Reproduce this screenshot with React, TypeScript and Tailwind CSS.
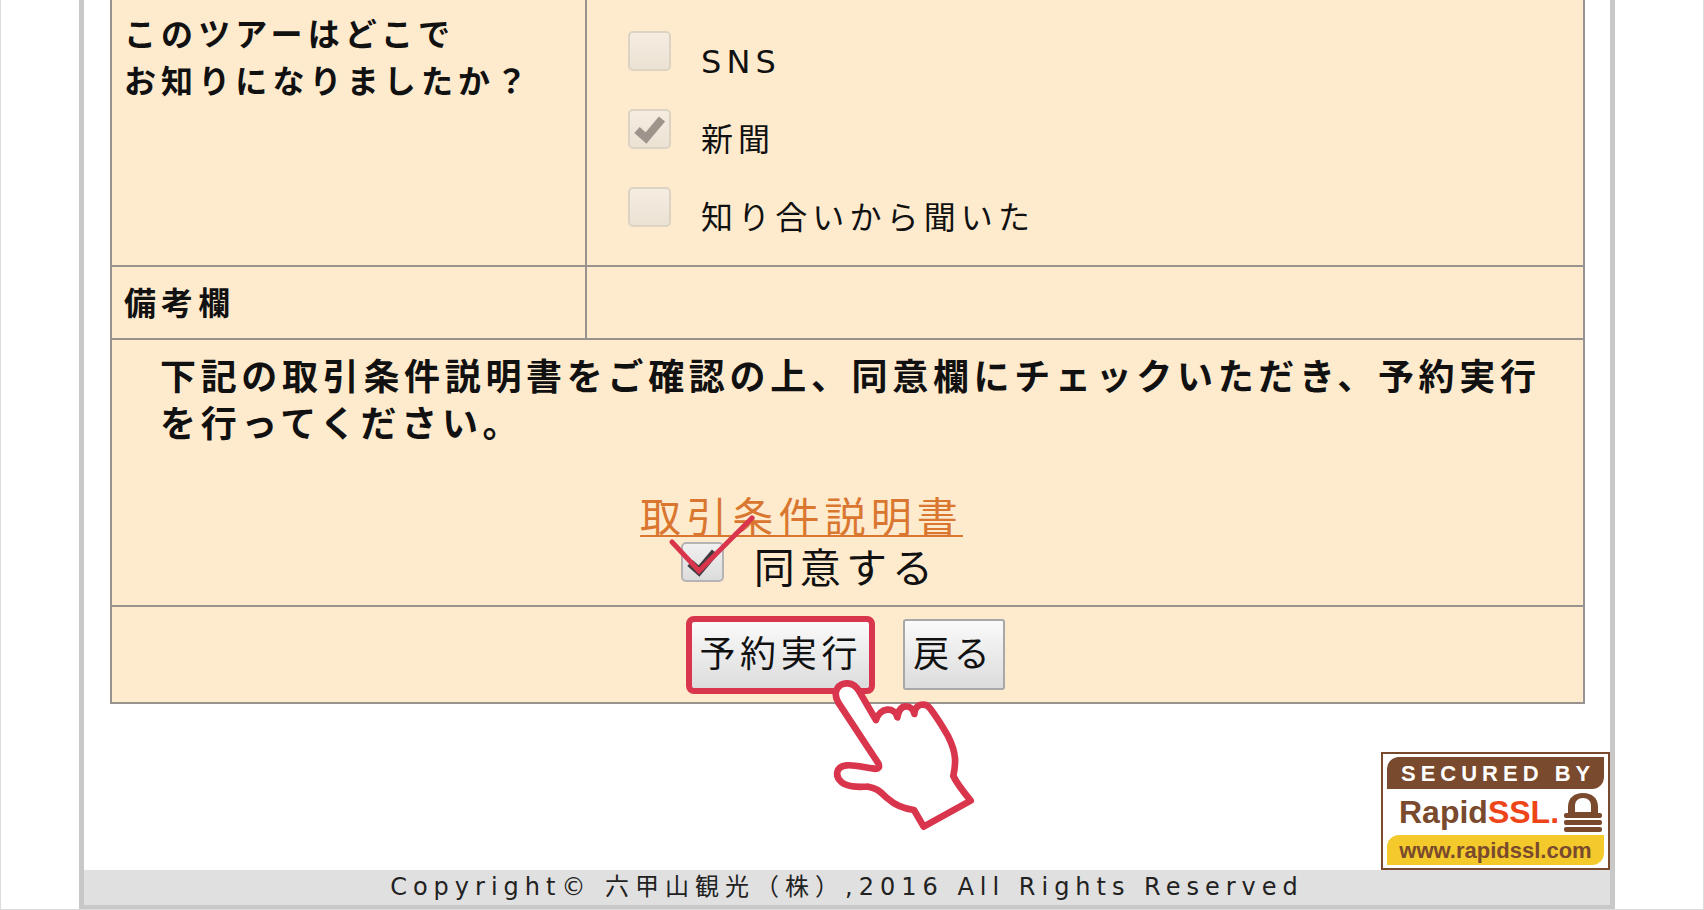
type Source = {
  id: string;
  label: string;
  checked: boolean;
};

const sources: Source[] = [
  { id: "sns", label: "SNS", checked: false },
  { id: "newspaper", label: "新聞", checked: true },
  { id: "friend", label: "知り合いから聞いた", checked: false },
];

type CheckBoxProps = {
  id: string;
  checked: boolean;
  disabled?: boolean;
};

const CheckBox = ({ id, checked, disabled }: CheckBoxProps) => (
  <span className="relative block h-10 w-[43px] shrink-0">
    <input
      id={id}
      type="checkbox"
      defaultChecked={checked}
      disabled={disabled}
      className="peer block h-10 w-[43px] appearance-none rounded-[5px] border-2 border-[#b5b3b3] bg-linear-to-b from-[#f0f0f0] to-[#dcdcde] disabled:border-[#ddd3c4] disabled:from-[#f5ede0] disabled:to-[#ebe2d4]"
    />
    <svg
      viewBox="0 0 43 40"
      className="pointer-events-none absolute inset-0 hidden h-10 w-[43px] fill-none stroke-[#403c40] stroke-8 peer-checked:block peer-disabled:stroke-[#9d948b]"
    >
      <path d="M9 21 L18 29 L34 10" />
    </svg>
  </span>
);

const SourceList = () => (
  <ul className="pt-[31px]">
    {sources.map((source) => (
      <li key={source.id} className="flex h-[78px] items-start gap-[30px]">
        <CheckBox id={source.id} checked={source.checked} disabled />
        <label htmlFor={source.id} className="pt-2">
          {source.label}
        </label>
      </li>
    ))}
  </ul>
);

const Agreement = () => (
  <>
    <p className="pr-6 pl-12 text-[36px] font-bold tracking-[0.13em]">
      下記の取引条件説明書をご確認の上、同意欄にチェックいただき、予約実行を行ってください。
    </p>
    <div className="mt-[47px] pr-[92px] text-center text-[41px]">
      <a
        href="#terms"
        className="text-[#d9762f] underline decoration-2 underline-offset-3"
      >
        取引条件説明書
      </a>
    </div>
    <div className="flex justify-center pr-[76px] text-[41px]">
      <div className="relative flex items-start gap-[30px]">
        <CheckBox id="agree" checked />
        <label htmlFor="agree" className="pt-1">
          同意する
        </label>
        <svg
          viewBox="0 0 90 65"
          className="pointer-events-none absolute -top-7 -left-3 h-[65px] w-[90px] fill-none stroke-[#d9354c] stroke-5"
        >
          <path d="M3 28 L30 57 L83 4" strokeLinecap="round" />
        </svg>
      </div>
    </div>
  </>
);

const PointingHand = () => (
  <svg
    viewBox="0 0 600 570"
    className="pointer-events-none absolute top-11 left-[114px] z-10 h-[190px] w-[200px]"
  >
    <path
      d="M228 180 L178 95 C160 62 125 65 112 85 C104 98 106 112 115 128 L235 310 C240 322 236 328 222 326 C190 322 165 314 140 316 C105 320 105 350 125 367 C150 385 185 380 205 380 C235 385 245 400 262 415 C290 440 315 447 342 450 L371 500 L512 422 C490 395 470 370 460 348 C468 310 470 280 445 230 C425 195 405 165 390 145 C378 128 345 128 343 162 C338 135 300 125 292 172 C285 140 240 140 228 180 Z"
      fill="#fff"
      stroke="#d9354c"
      strokeWidth="20"
      strokeLinejoin="round"
    />
  </svg>
);

const Actions = () => (
  <div className="flex items-center justify-center gap-7 pr-1 text-[36px]">
    <div className="relative">
      <button
        type="submit"
        className="block h-[78px] rounded-lg border-6 border-[#d9354c] bg-linear-to-b from-[#fafafa] to-[#dcdcdc] px-[7px] tracking-[0.13em]"
      >
        予約実行
      </button>
      <PointingHand />
    </div>
    <button
      type="button"
      className="h-[71px] rounded-[3px] border-2 border-[#a8a8a8] bg-linear-to-b from-[#fafafa] to-[#dcdcdc] px-2 tracking-[0.13em]"
    >
      戻る
    </button>
  </div>
);

const RapidSslBadge = () => (
  <a
    href="#rapidssl"
    className="flex h-[118px] w-[229px] flex-col border-2 border-[#794a2d] bg-white p-1 pt-[3px] font-['Liberation_Sans',sans-serif] font-bold text-[#794a2d]"
  >
    <span className="h-8 rounded-tl-xl rounded-br-xl bg-[#794a2d] pl-[14px] text-[22px] leading-[34px] tracking-[5px] whitespace-nowrap text-white">
      SECURED BY
    </span>
    <span className="flex h-[46px] items-center justify-between pr-[2px] pl-3 text-[32px] leading-[46px]">
      <span>
        Rapid<span className="text-[#ee4518]">SSL.</span>
      </span>
      <svg viewBox="0 0 38 40" className="h-10 w-[38px]" fill="#794a2d">
        <path d="M4 21 V15 C4 6 10 1 19 1 C28 1 34 6 34 15 V21 Z" />
        <path d="M11 20 V14 C11 9 14 6 19 6 C24 6 27 9 27 14 V20 Z" fill="#fff" />
        <rect x="0" y="21" width="38" height="5" rx="2" />
        <rect x="0" y="28" width="38" height="5" rx="2" />
        <rect x="0" y="35" width="38" height="5" rx="2" />
      </svg>
    </span>
    <span className="h-[30px] rounded-tl-xl rounded-br-xl bg-[#f4c92c] text-center text-[22px] leading-[32px]">
      www.rapidssl.com
    </span>
  </a>
);

const cell = "border-2 border-[#999390] p-0";

const App = () => {
  return (
    <div className="border-x border-b border-[#dcdcdc] bg-white font-['DejaVu_Sans','Noto_Sans_CJK_JP',sans-serif] text-[#111]">
      <div className="mr-[88px] ml-[78px] border-x-5 border-b-4 border-[#c8c8c8]">
        <form className="pr-[25px] pl-[26px]">
          <table className="w-full table-fixed border-collapse bg-[#feebce] text-[32px] leading-[47px] tracking-[0.16em]">
            <colgroup>
              <col className="w-[475px]" />
              <col />
            </colgroup>
            <tbody>
              <tr>
                <th
                  className={`${cell} h-[266px] border-t-0 pt-3 pl-3 text-left align-top`}
                >
                  このツアーはどこで
                  <br />
                  お知りになりましたか？
                </th>
                <td className={`${cell} border-t-0 pl-[41px] align-top`}>
                  <SourceList />
                </td>
              </tr>
              <tr>
                <th className={`${cell} h-[73px] pt-[3px] pl-3 text-left`}>
                  備考欄
                </th>
                <td className={cell} />
              </tr>
              <tr>
                <td
                  colSpan={2}
                  className={`${cell} h-[267px] pt-[14px] align-top`}
                >
                  <Agreement />
                </td>
              </tr>
              <tr>
                <td colSpan={2} className={`${cell} h-[97px]`}>
                  <Actions />
                </td>
              </tr>
            </tbody>
          </table>
        </form>
        <div className="mt-12 flex justify-end">
          <RapidSslBadge />
        </div>
        <footer className="bg-[#e0e0e0] text-center text-[24px] leading-[35px] tracking-[6px] text-[#222]">
          Copyright© 六甲山観光（株）,2016 All Rights Reserved
        </footer>
      </div>
    </div>
  );
};

export default App;
